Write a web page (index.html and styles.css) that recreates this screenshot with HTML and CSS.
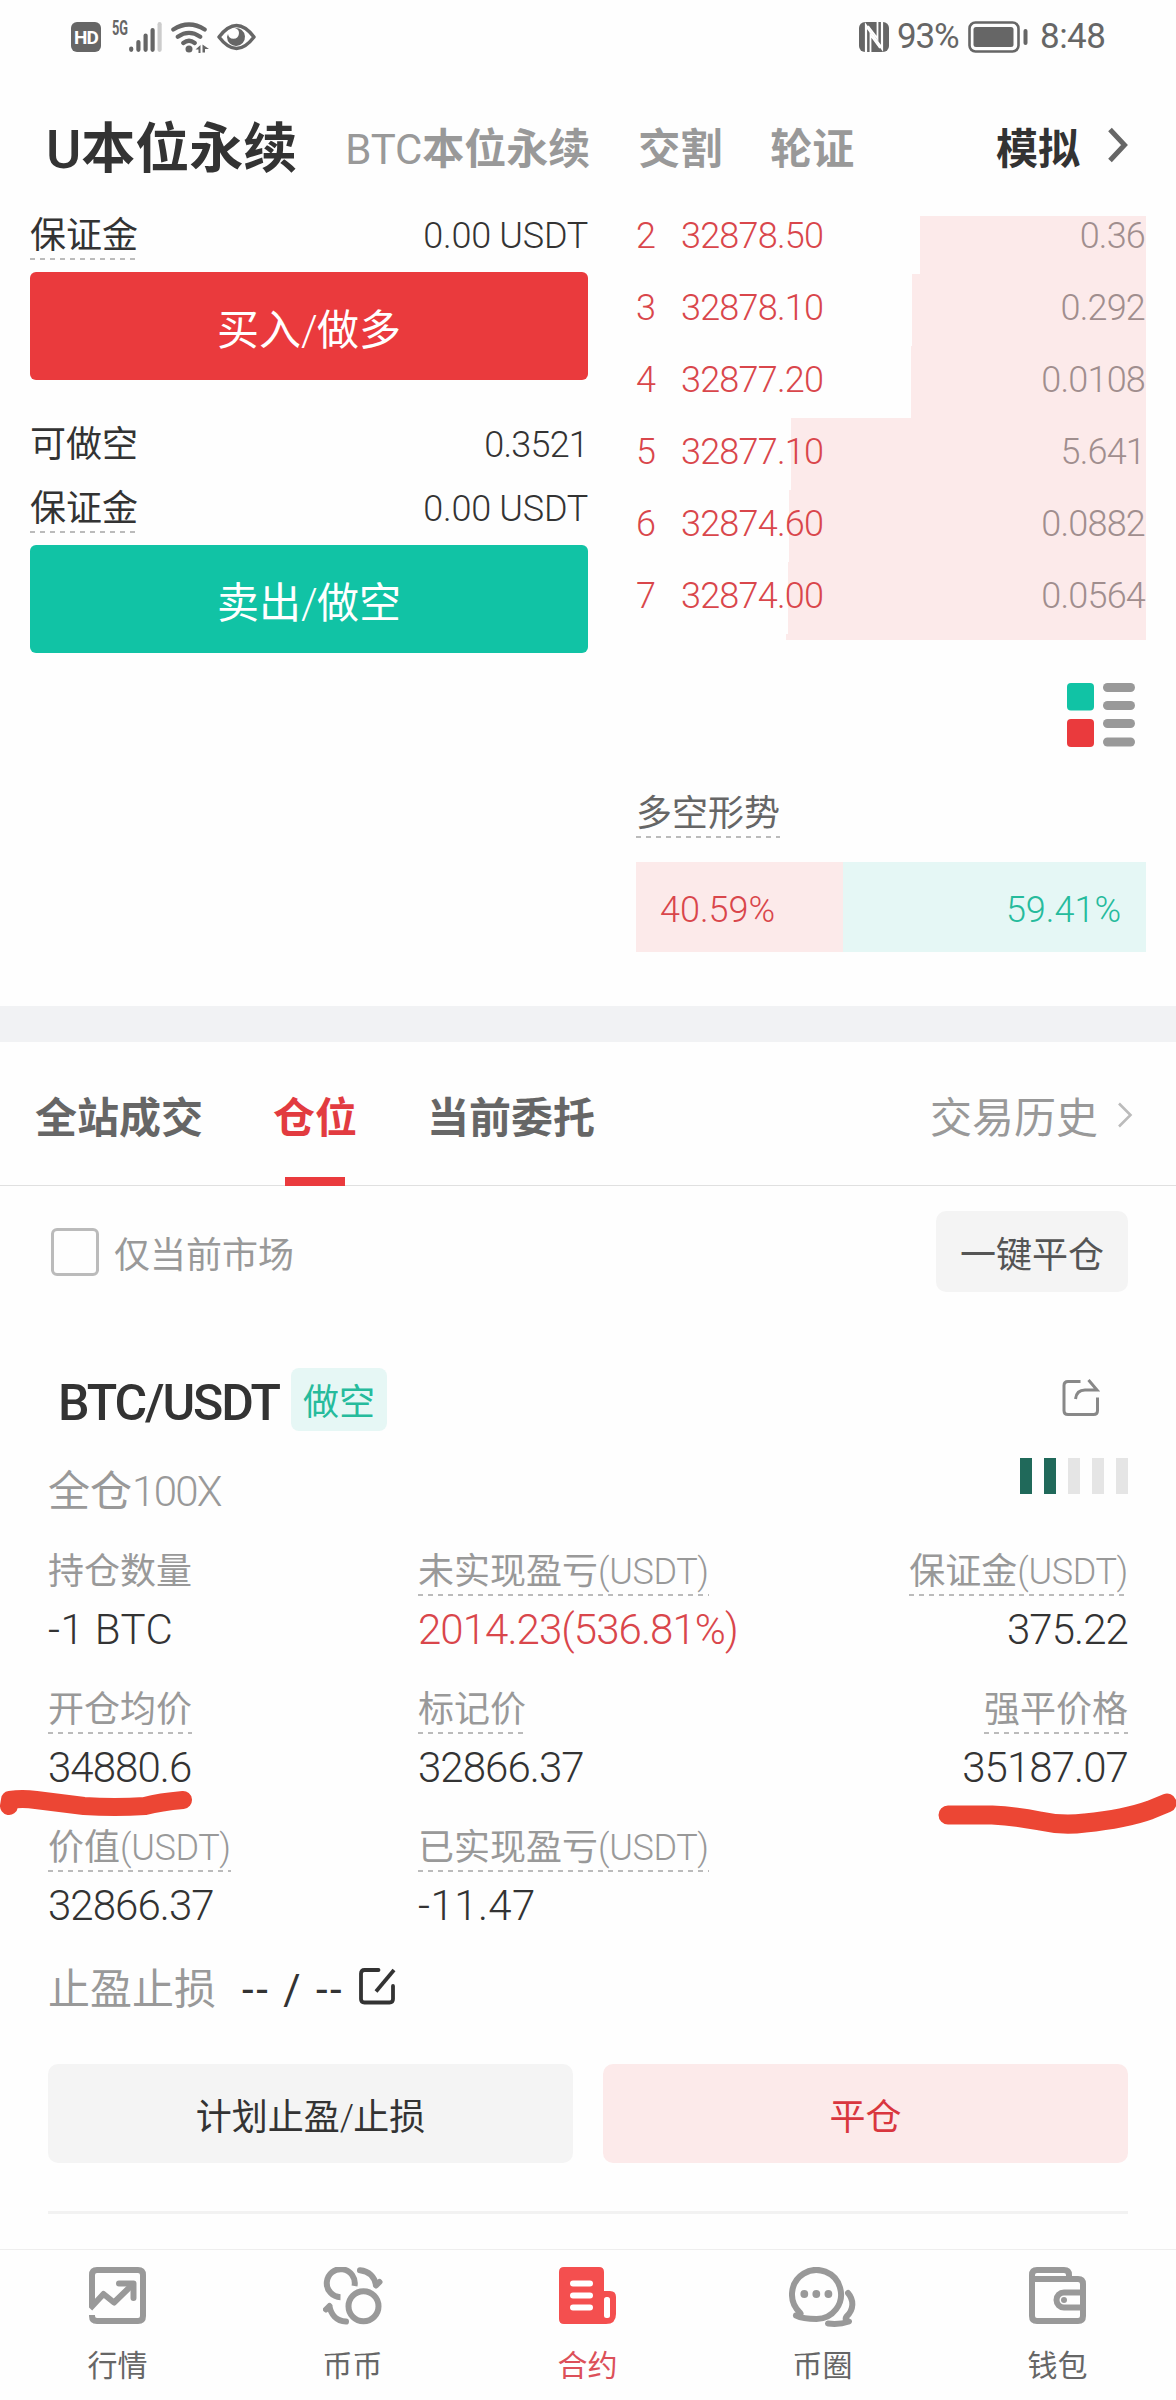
FILE: index.html
```html
<!DOCTYPE html>
<html lang="zh-CN">
<head>
<meta charset="utf-8">
<title>合约交易</title>
<link rel="stylesheet" href="styles.css">
</head>
<body>
<div class="screen">
  <div class="status">
    <div class="status-left">
      <span class="hd">HD</span>
      <span class="net">5G</span>
      <svg class="signal" width="33" height="30" viewBox="0 0 33 30"><g stroke="#666" stroke-width="4.2" stroke-linecap="round"><path d="M2.2 26.5v1.3M9.4 20v7.8M16.6 13.500v14.300M23.600 8v19.800"/><path stroke="#ccc" d="M30.600 2.200v25.600"/></g></svg>
      <svg class="wifi" width="38" height="31" viewBox="0 0 38 31"><g fill="none" stroke="#666" stroke-width="4.200" stroke-linecap="round"><path d="M2.300 7.500Q18 -2.500 33.700 7.500M6.800 14.800Q18 7 29.200 14.800M12.300 21Q18 16.500 23.700 21"/></g><circle cx="18" cy="27" r="3.500" fill="#666"/><path fill="#666" d="M24.500 27.500l5-4.500v8h-2v-3.500zM31.500 22.500l6.500 4.500h-4v3.500h-2.500z"/></svg>
      <svg class="eye" width="39" height="28" viewBox="0 0 39 28"><path d="M2 14Q19.500 -9 37 14Q19.500 37 2 14z" fill="none" stroke="#666" stroke-width="3.500" stroke-linejoin="round"/><path fill="#666" d="M18 5a9 9 0 1 1-8 9l1-3a5.500 5.500 0 1 0 7-6z"/></svg>
    </div>
    <div class="status-right">
      <svg width="30" height="30" viewBox="0 0 30 30"><rect width="30" height="30" rx="6" fill="#666"/><path d="M7 30V3.500L23 26.500V0" fill="none" stroke="#fff" stroke-width="2.200"/><path d="M11.500 30V13L21 26M9 4l9.500 12.500V0" fill="none" stroke="#fff" stroke-width="1.800"/></svg>
      <span class="battery-text">93%</span>
      <svg class="battery" width="60" height="32" viewBox="0 0 60 32"><rect x="1.500" y="1.500" width="49" height="29" rx="6" fill="none" stroke="#666" stroke-width="2.600"/><rect x="5.500" y="6" width="40" height="20" rx="2.500" fill="#666"/><rect x="55.500" y="8" width="4" height="16" rx="2" fill="#666"/></svg>
      <span class="clock">8:48</span>
    </div>
  </div>

  <header class="markets">
    <b class="market market-on"><span class="n">U</span>本位永续</b>
    <b class="market market-btc"><span class="n">BTC</span>本位永续</b>
    <b class="market">交割</b>
    <b class="market">轮证</b>
    <b class="demo">模拟</b>
    <svg class="demo-arrow" width="22" height="36" viewBox="0 0 22 36"><path d="M3 2.500L17.500 18L3 33.500" fill="none" stroke="#666" stroke-width="5"/></svg>
  </header>

  <main class="trade">
    <section class="order">
      <div class="pair"><span class="hint">保证金</span><span class="n usdt">0.00 USDT</span></div>
      <div class="btn buy">买入<span class="n">/</span>做多</div>
      <div class="pair pair-max"><span>可做空</span><span class="n">0.3521</span></div>
      <div class="pair pair-cost"><span class="hint">保证金</span><span class="n usdt">0.00 USDT</span></div>
      <div class="btn sell">卖出<span class="n">/</span>做空</div>
    </section>
    <section class="book">
      <div class="asks n">
        <div class="ask ask-cut"><i class="depth" style="width:226px"></i><span class="idx">2</span><span>32878.50</span><span class="qty">0.36</span></div>
        <div class="ask"><i class="depth" style="width:234px"></i><span class="idx">3</span><span>32878.10</span><span class="qty">0.292</span></div>
        <div class="ask"><i class="depth" style="width:235px"></i><span class="idx">4</span><span>32877.20</span><span class="qty">0.0108</span></div>
        <div class="ask"><i class="depth" style="width:355px"></i><span class="idx">5</span><span>32877.10</span><span class="qty">5.641</span></div>
        <div class="ask"><i class="depth" style="width:357px"></i><span class="idx">6</span><span>32874.60</span><span class="qty">0.0882</span></div>
        <div class="ask"><i class="depth" style="width:358px"></i><span class="idx">7</span><span>32874.00</span><span class="qty">0.0564</span></div>
        <div class="ask ask-end"><i class="depth" style="width:360px"></i></div>
      </div>
      <svg class="layout" width="68" height="64" viewBox="0 0 68 64"><rect width="27" height="27.500" rx="4" fill="#11c3a5"/><rect y="36" width="27" height="28" rx="4" fill="#ea3a3d"/><g fill="#999"><rect x="36" width="32" height="9" rx="4.500"/><rect x="36" y="18" width="32" height="9" rx="4.500"/><rect x="36" y="36" width="32" height="9" rx="4.500"/><rect x="36" y="54.500" width="32" height="9" rx="4.500"/></g></svg>
      <div class="trend"><span class="hint">多空形势</span></div>
      <div class="ratio n"><div class="long" style="width:40.59%">40.59%</div><div class="short">59.41%</div></div>
    </section>
  </main>

  <nav class="tabs">
    <b class="tab">全站成交</b>
    <b class="tab tab-on">仓位</b>
    <b class="tab">当前委托</b>
    <span class="history">交易历史</span>
    <svg width="16" height="26" viewBox="0 0 16 26"><path d="M2 1.500L13.500 13L2 24.500" fill="none" stroke="#bbb" stroke-width="2.600"/></svg>
  </nav>

  <section class="position">
    <div class="filter"><i class="check"></i><span class="filter-label">仅当前市场</span><span class="close-all">一键平仓</span></div>
    <div class="title">
      <span class="symbol n">BTC/USDT</span><span class="side">做空</span>
      <svg class="share" width="38" height="38" viewBox="0 0 38 38"><g fill="none" stroke="#888" stroke-width="3"><path d="M18.500 2.500H6Q2 2.500 2 6.500V31.500Q2 35.500 6 35.500H31.500Q35.500 35.500 35.500 31.500V18.500"/><path d="M13.500 20Q14.500 11 23 11H35L26.500 1"/></g></svg>
    </div>
    <div class="lever"><span>全仓<span class="n">100X</span></span><span class="risk"><i class="on"></i><i class="on"></i><i></i><i></i><i></i></span></div>
    <div class="stats">
      <div class="stat"><span class="label">持仓数量</span><span class="value n amount">-1 BTC</span></div>
      <div class="stat"><span class="label hint">未实现盈亏<span class="n">(USDT)</span></span><span class="value n red">2014.23(536.81%)</span></div>
      <div class="stat end"><span class="label hint">保证金<span class="n">(USDT)</span></span><span class="value n">375.22</span></div>
      <div class="stat"><span class="label hint">开仓均价</span><span class="value n">34880.6</span></div>
      <div class="stat"><span class="label hint">标记价</span><span class="value n">32866.37</span></div>
      <div class="stat end"><span class="label hint">强平价格</span><span class="value n">35187.07</span></div>
      <div class="stat"><span class="label hint">价值<span class="n">(USDT)</span></span><span class="value n">32866.37</span></div>
      <div class="stat"><span class="label hint">已实现盈亏<span class="n">(USDT)</span></span><span class="value n amount">-11.47</span></div>
    </div>
    <div class="stop">
      <span>止盈止损</span><span class="stop-value">-- / --</span>
      <svg width="37" height="37" viewBox="0 0 37 37"><g fill="none" stroke="#333" stroke-width="3.800"><path stroke-linecap="round" d="M19.500 2H5.500Q2 2 2 5.500V31Q2 34.500 5.500 34.500H30.500Q34 34.500 34 31V18"/><path d="M17 23.500L35 2"/></g></svg>
    </div>
    <div class="actions"><div class="action">计划止盈<span class="n">/</span>止损</div><div class="action action-close">平仓</div></div>
  </section>

  <nav class="dock">
    <div class="dock-item"><svg width="57" height="57" viewBox="0 0 57 57"><g fill="none" stroke="#999" stroke-width="6"><path d="M3 38V8Q3 3 8 3H49Q54 3 54 8V49Q54 54 49 54H8Q3 54 3 49V48"/><path d="M1 41.500L14.500 27L25 35.500L44 17" stroke-linejoin="round"/><path d="M30 16.500H44.500V31" stroke-linecap="round" stroke-linejoin="round"/></g></svg><span>行情</span></div>
    <div class="dock-item"><svg width="60" height="58" viewBox="0 0 60 58"><g fill="none" stroke="#999" stroke-width="6"><path d="M31.500 19A14 14 0 1 0 17.500 30.200"/><circle cx="40.500" cy="39.300" r="15"/><g stroke-linecap="round"><path d="M37 3.200C46 4 51.500 10 53 18M56.500 15L53 18.500"/><path d="M23 54.500C13 54 8 47 6.500 39.500M3 42.500L6.500 39"/></g></g></svg><span>币币</span></div>
    <div class="dock-item dock-on"><svg width="57" height="57" viewBox="0 0 57 57"><path fill="#f44f4f" d="M5 0H40Q45 0 45 5V24H51Q57 24 57 30V47Q57 57 47 57H5Q0 57 0 52V5Q0 0 5 0z"/><path d="M14 16.500H31M14 28.500H31M14 40.500H31" stroke="#fff" stroke-width="6" stroke-linecap="round"/><rect x="45" y="30" width="6" height="21" rx="2.500" fill="#fff"/></svg><span>合约</span></div>
    <div class="dock-item"><svg width="67" height="60" viewBox="0 0 67 60"><g fill="none" stroke="#999" stroke-width="6" stroke-linecap="round" stroke-linejoin="round"><path d="M7 48.500C13 51.500 20 52 27.500 52A24.500 24.500 0 1 0 11 45.600Q13.500 48 7 48.500"/><path d="M59 26C65 33 65 43 57.500 49.500Q55 53 60 54.500Q50 58 39 56.500"/></g><g fill="#999"><circle cx="15.300" cy="27" r="3.900"/><circle cx="27.300" cy="27" r="3.900"/><circle cx="39.400" cy="27" r="3.900"/></g></svg><span>币圈</span></div>
    <div class="dock-item"><svg width="57" height="57" viewBox="0 0 57 57"><g fill="none" stroke="#999" stroke-width="6"><path d="M3 13V8Q3 3 8 3H35Q40 3 40 8V12"/><path d="M3 12H49Q54 12 54 17V49Q54 54 49 54H8Q3 54 3 49z"/><path d="M54 25.500H35A7.500 7.500 0 0 0 35 40.500H54"/></g><circle cx="35" cy="33" r="3" fill="#999"/></svg><span>钱包</span></div>
  </nav>

  <svg class="marker" width="1176" height="60" viewBox="0 1780 1176 60"><g fill="none" stroke="#ec4634" stroke-linecap="round" stroke-linejoin="round"><path stroke-width="18" d="M9 1806L10 1800Q22 1798 36 1800L84 1806Q115 1808 145 1806Q160 1802 183 1800"/><path stroke-width="19" d="M948 1815H992Q1015 1816 1040 1821Q1062 1826 1085 1823Q1125 1819 1150 1810L1167 1803"/></g></svg>
</div>
</body>
</html>
```
FILE: styles.css
```css
* { box-sizing: border-box; }
body {
  margin: 0;
  background: #fefefe;
  color: #333;
  font: 36px/46px Roboto, "Noto Sans CJK SC", sans-serif;
}
svg { display: block; flex: none; }
i { font-style: normal; }
.screen {
  position: relative;
  display: flex;
  flex-direction: column;
  width: 1176px;
  height: 2400px;
  overflow: hidden;
}
.n { font-weight: 300; letter-spacing: -0.022em; }
.hint {
  background: repeating-linear-gradient(90deg, #bbb 0 5px, transparent 5px 10px) left bottom / 100% 2px no-repeat;
}
.red { color: #d9464b; }

.status {
  display: flex;
  justify-content: space-between;
  height: 100px;
  padding: 16px 71px 0;
  color: #666;
}
.status-left, .status-right { display: flex; align-items: center; height: 42px; }
.hd {
  width: 30px;
  height: 30px;
  border-radius: 6px;
  background: #666;
  color: #fff;
  font-size: 19px;
  font-weight: 700;
  line-height: 31px;
  text-align: center;
  letter-spacing: -1px;
}
.net { width: 16px; margin: 0 1px 18px 11px; font-size: 20px; font-weight: 700; line-height: 18px; transform: scaleX(0.64); transform-origin: left; }
.wifi { margin-left: 9px; }
.eye { margin-left: 8px; }
.battery-text { width: 64px; margin: 0 7px 0 8px; letter-spacing: -0.035em; white-space: nowrap; font-size: 35px; line-height: 44px; }
.clock { width: 65px; margin-left: 12px; font-size: 35px; letter-spacing: -0.015em; }

.markets {
  display: flex;
  align-items: center;
  height: 100px;
  padding: 0 45px 0 46px;
  font-size: 42px;
  line-height: 60px;
  color: #999;
  white-space: nowrap;
}
.markets .n { font-weight: 500; letter-spacing: 0; }
.market { margin-right: 48px; }
.market-on { color: #333; font-size: 54px; }
.market-btc .n { font-weight: 400; letter-spacing: -0.005em; }
.demo { margin-left: auto; color: #333; }
.demo-arrow { margin: 0 2px 11px 27px; }

.trade { display: flex; gap: 48px; height: 806px; padding: 0 30px; }
.order { width: 558px; padding-top: 14px; }
.pair { display: flex; justify-content: space-between; height: 46px; line-height: 44px; }
.pair-max { margin-top: 42px; line-height: 46px; }
.pair-cost { margin-top: 19px; }
.usdt { letter-spacing: -0.007em; }
.btn {
  height: 108px;
  margin-top: 12px;
  border-radius: 6px;
  color: #fff;
  font-size: 42px;
  line-height: 117px;
  text-align: center;
}
.buy { background: #ea3a3d; }
.sell { background: #11c3a5; }

.book { width: 510px; padding-top: 16px; }
.asks { display: flex; flex-direction: column; height: 424px; color: #d9464b; line-height: 40px; }
.ask { position: relative; display: flex; flex: none; align-items: flex-end; height: 72px; padding: 0 1px 18px 0; }
.ask-cut { height: 58px; }
.ask-end { height: 6px; padding: 0; }
.ask span { position: relative; }
.depth { position: absolute; right: 0; top: 0; bottom: 0; background: #fceaea; }
.idx { width: 45px; }
.qty { margin-left: auto; color: #a08e8e; }
.layout { margin: 43px 11px 0 auto; }
.trend { display: flex; height: 48px; margin-top: 43px; color: #666; line-height: 48px; }
.ratio { display: flex; height: 90px; margin-top: 24px; line-height: 96px; letter-spacing: 0; }
.long { padding-left: 24px; background: #fceaea; color: #d9464b; }
.short { flex: 1; padding-right: 25px; background: #e5f7f5; color: #26bb9c; text-align: right; }

.tabs {
  display: flex;
  align-items: center;
  height: 180px;
  padding: 11px 43px 0 35px;
  border-top: 36px solid #f1f2f4;
  border-bottom: 1px solid #e0e0e0;
  color: #666;
  font-size: 42px;
}
.tab { position: relative; margin-right: 70px; }
.tab-on { color: #e23b40; }
.tab-on::after { content: ""; position: absolute; left: 12px; bottom: -44px; width: 60px; height: 9px; background: #ea3a3d; }
.history { margin-left: auto; color: #999; }
.tabs svg { margin: 0 0 8px 19px; }

.position { flex: none; height: 1003px; margin: 25px 48px 0; border-bottom: 3px solid #f2f2f2; }
.filter { display: flex; align-items: center; height: 81px; padding-left: 3px; color: #999; }
.check { width: 48px; height: 48px; margin: 0 15px 0 0; border: 3px solid #bbb; border-radius: 6px; }
.filter-label { padding-top: 8px; }
.close-all {
  width: 192px;
  height: 81px;
  margin-left: auto;
  border-radius: 10px;
  background: #f4f4f4;
  color: #555;
  line-height: 90px;
  text-align: center;
}
.title { display: flex; height: 63px; margin-top: 76px; padding-left: 10px; }
.symbol { width: 233px; font-size: 50px; font-weight: 500; line-height: 70px; letter-spacing: -0.042em; white-space: nowrap; }
.side { width: 96px; border-radius: 8px; background: #e6f7f5; color: #26bb9c; line-height: 71px; text-align: center; }
.share { margin: 11px 28px 0 auto; }
.lever { display: flex; justify-content: space-between; height: 90px; margin-top: 27px; color: #999; font-size: 42px; line-height: 68px; }
.lever .n { letter-spacing: -0.04em; }
.risk { display: flex; gap: 12px; height: 36px; }
.risk i { width: 12px; background: #e5e5e5; }
.risk .on { background: #20695a; }
.stats { display: grid; grid-template-columns: 370px 390px 1fr; gap: 32px 0; }
.stat { display: flex; flex-direction: column; align-items: flex-start; gap: 10px; }
.end { align-items: flex-end; }
.label { color: #999; line-height: 48px; }
.label .n { letter-spacing: -0.01em; }
.value { font-size: 42px; line-height: 48px; white-space: nowrap; }
.amount { letter-spacing: 0.01em; }
.stop { display: flex; align-items: center; height: 50px; margin-top: 35px; color: #999; font-size: 42px; line-height: 50px; }
.stop-value { width: 120px; margin: 0 -3px 0 26px; color: #333; white-space: nowrap; letter-spacing: 0.06em; }
.stop svg { margin-bottom: 8px; }
.actions { display: flex; gap: 30px; margin-top: 49px; }
.action { flex: 1; height: 99px; border-radius: 10px; background: #f4f4f4; line-height: 108px; text-align: center; }
.action-close { background: #fceaea; color: #d9363e; }

.dock { display: flex; height: 151px; margin-top: auto; padding-right: 1px; border-top: 1px solid #eee; color: #666; font-size: 30px; line-height: 40px; }
.dock-item { display: flex; flex: 1; flex-direction: column; align-items: center; justify-content: space-between; height: 136px; padding-top: 17px; }
.dock-on { color: #dc5059; }
.marker { position: absolute; left: 0; top: 1780px; }
```
